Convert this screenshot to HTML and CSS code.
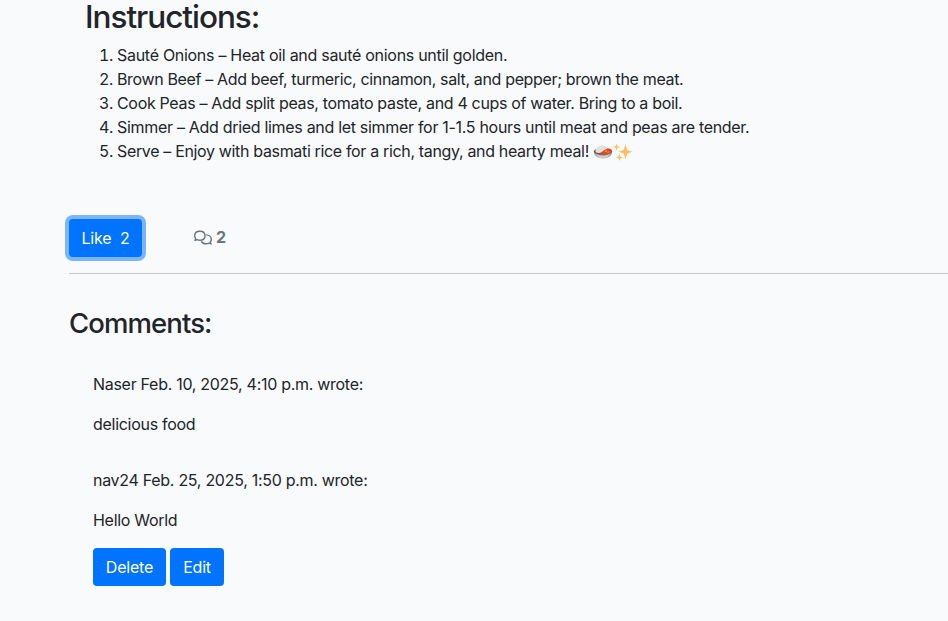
FILE: index.html
```html
<!DOCTYPE html>
<html lang="en">
<head>
<meta charset="utf-8">
<title>Recipe</title>
<link rel="stylesheet" href="styles.css">
</head>
<body>
<main class="post">
  <section class="recipe">
    <h2>Instructions:</h2>
    <ol>
      <li><span class="l1">Sauté Onions – Heat oil and sauté onions until golden.</span></li>
      <li><span class="l2">Brown Beef – Add beef, turmeric, cinnamon, salt, and pepper; brown the meat.</span></li>
      <li><span class="l3">Cook Peas – Add split peas, tomato paste, and 4 cups of water. Bring to a boil.</span></li>
      <li><span class="l4">Simmer – Add dried limes and let simmer for 1-1.5 hours until meat and peas are tender.</span></li>
      <li><span class="l5">Serve – Enjoy with basmati rice for a rich, tangy, and hearty meal!</span>
        <svg class="emoji" viewBox="0 0 40 20"><path d="M.8 9.500h18.400c0 4-4 6.800-9.200 6.800S.8 13.500.8 9.500z" fill="#9b999a"/><path d="M2.500 11.500c3 3 12 3 15 0-1 3-4 4.800-7.500 4.800s-6.500-1.800-7.500-4.800z" fill="#cfcecd"/><ellipse cx="10" cy="9.300" rx="9.200" ry="3.400" fill="#6f5248"/><path d="M7 12c3-5 8-7 11.800-4 1.200 2.500-4 4.400-8 4.400z" fill="#df4a22"/><path d="M2.500 9.500C2.500 6 5.500 3.200 9 3.200c2.800 0 4.800 1.300 5.800 3.300-3 .5-4.500 3-7.300 4.200-2.500.5-5 .1-5-1.200z" fill="#e3e1dd"/><path d="M12 9.800l2-1.200M14.500 10.500l1.500-.8" stroke="#f7a33c" stroke-width="1.300"/><path d="M32.500 2l1.800 6 5.200 1.800-5.200 1.800-1.800 6-1.800-6-5.200-1.800L30.700 8zM23.500 1.500l.9 2.600 2.600.9-2.600.9-.9 2.600-.9-2.600L20 5l2.600-.9zM26.500 12l.9 2.600 2.600.9-2.600.9-.9 2.600-.9-2.600-2.600-.9 2.600-.9z" fill="#fac15f"/></svg></li>
    </ol>
  </section>
  <div class="actions">
    <button class="btn like">Like&nbsp; 2</button>
    <div class="count"><svg viewBox="0 0 640 512"><path d="M208 352c115 0 184-70 184-160S323 32 208 32 24 102 24 192c0 37 13 71 36 98 0 27-14 49-32 62 34 0 65-11 87-22 28 14 59 22 93 22z"/><path d="M432 162c104 5 184 71 184 158 0 37-14 70-36 98 0 27 14 49 32 62-34 0-65-11-87-22-28 14-59 22-93 22-80 0-144-35-171-88"/></svg><strong>2</strong></div>
  </div>
  <hr>
  <h3>Comments:</h3>
  <section class="comments">
    <article><p>Naser Feb. 10, 2025, 4:10 p.m. wrote:</p><p>delicious food</p></article>
    <article><p>nav24 Feb. 25, 2025, 1:50 p.m. wrote:</p><p>Hello World</p>
      <div class="buttons"><button class="btn">Delete</button><button class="btn">Edit</button></div></article>
  </section>
</main>
</body>
</html>
```
FILE: styles.css
```css
*{box-sizing:border-box}
body{margin:0;background:#f9fafc;color:#212529;font:400 16px/24px Inter,"Liberation Sans",sans-serif;letter-spacing:-.29px}
.post{padding-left:69px}
.recipe{padding-left:16px}
h2,h3,p,ol{margin:0}
h2{font-size:31.5px;line-height:34px;font-weight:550;letter-spacing:-1.03px;height:42px}
ol{padding-left:32px;height:120px;margin-top:1px}
li{white-space:nowrap}
.l2{letter-spacing:-.35px}
.l3{letter-spacing:-.325px}
.l4{letter-spacing:-.305px}
.l5{letter-spacing:-.34px}
.emoji{width:40px;height:20px;vertical-align:-5px}
.actions{display:flex;align-items:center;margin-top:56px}
.btn{display:block;height:38px;width:73px;padding:6px 0;border:0;border-radius:4px;background:#0073ff;color:#fff;font:inherit;letter-spacing:-.2px;white-space:pre;text-align:center}
.btn + .btn{width:54px}
.like{box-shadow:0 0 0 4px #7ab5fc}
.count{display:flex;align-items:center;gap:4px;margin:-2px 0 0 52px;color:#6c757d}
.count svg{width:18px;height:15px;fill:none;stroke:#6c757d;stroke-width:50;stroke-linejoin:round;overflow:visible}
hr{height:1px;border:0;margin:16px 0 0;background:#c4c6c8}
h3{font-size:27.5px;line-height:34px;font-weight:550;letter-spacing:-.9px;margin-top:32px}
.comments{padding:32px 0 0 24px}
article{padding-bottom:32px}
article p+p{margin-top:16px}
.buttons{display:flex;gap:4px;margin-top:16px}
```
